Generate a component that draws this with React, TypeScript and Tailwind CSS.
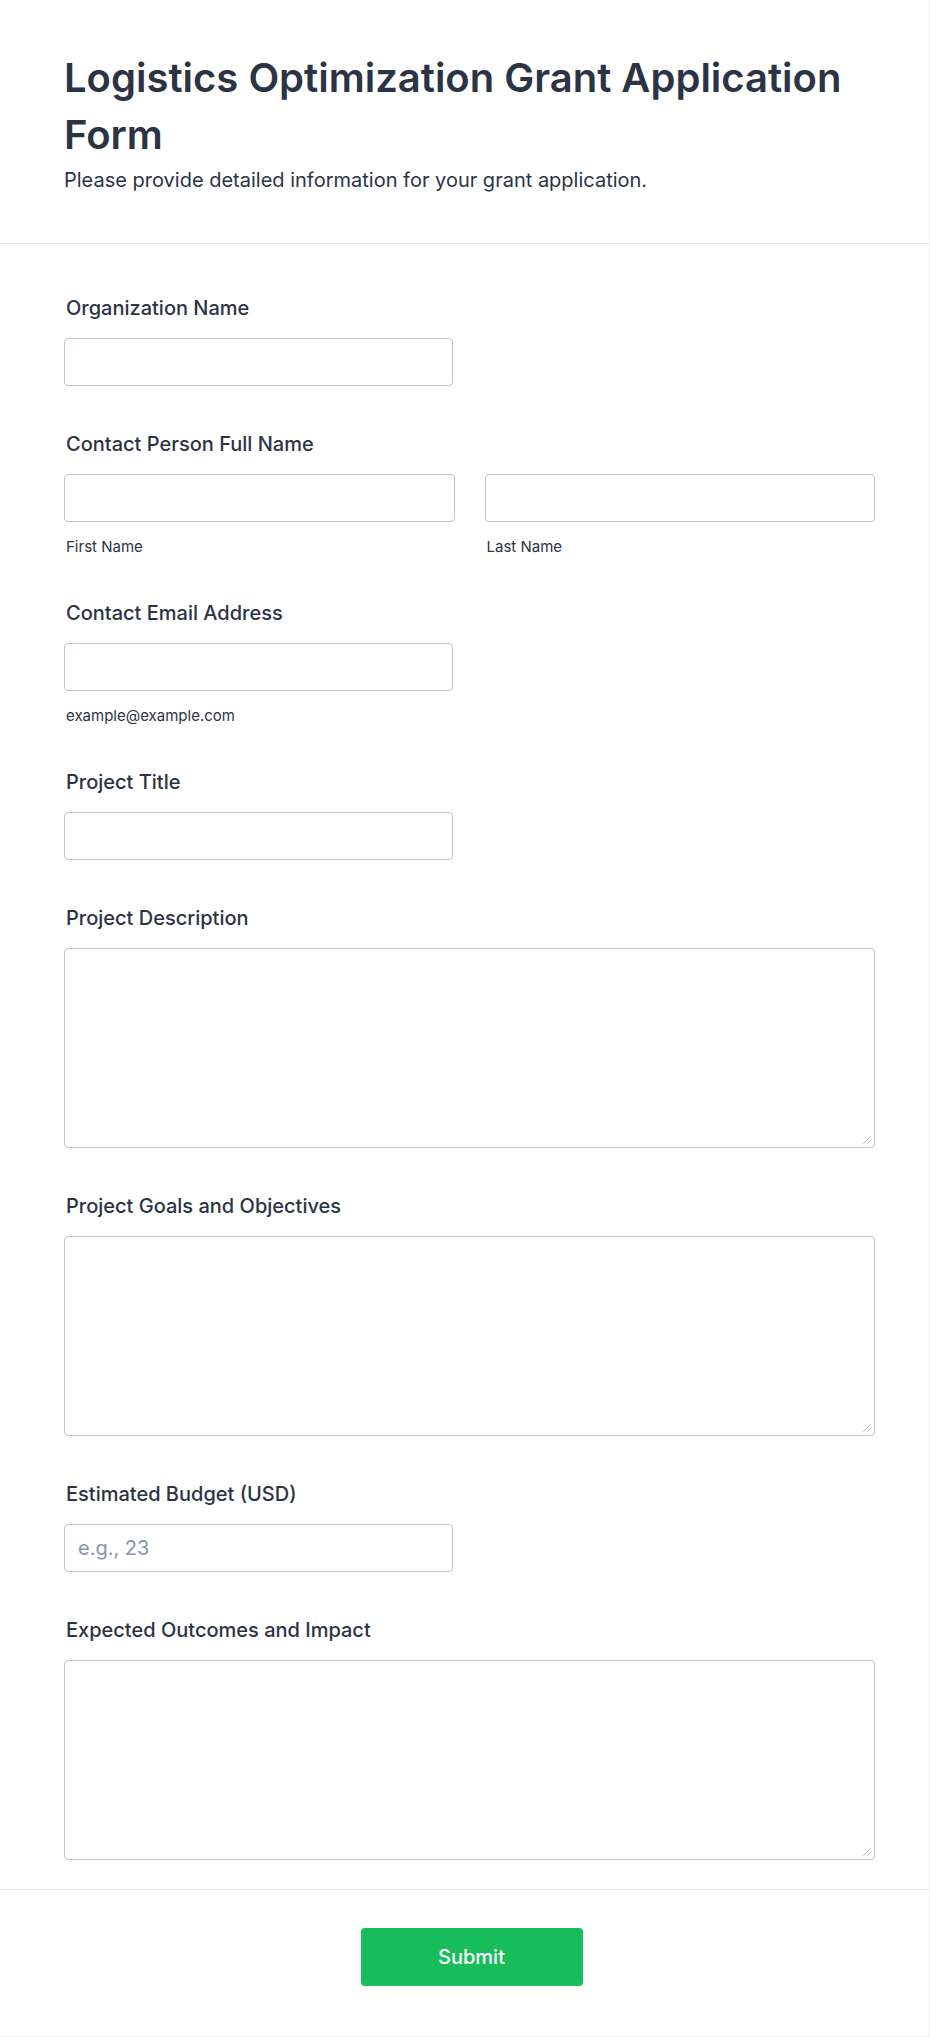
import React from "react";

const font = { fontFamily: "Inter, 'Noto Sans', sans-serif" };

function Label({ children }: { children: React.ReactNode }) {
  return (
    <label className="block pl-[2px] mb-[16px] text-[20px] leading-[28px] font-medium text-[#2c3345]">
      {children}
    </label>
  );
}

function Sub({ children }: { children: React.ReactNode }) {
  return (
    <div className="mt-[16px] pl-[2px] text-[15px] leading-[17px] text-[#2c3345]">{children}</div>
  );
}

const inputCls =
  "block h-[48px] rounded-[4px] border border-[#bcc3d2] bg-white px-[13px] text-[20px] text-[#2c3345] placeholder:text-[#8894ab] outline-none";

function Area() {
  return (
    <div className="relative">
      <textarea className="block w-full h-[200px] resize-none rounded-[4px] border border-[#bcc3d2] bg-white px-[13px] py-[10px] text-[20px] text-[#2c3345] outline-none" />
      <svg
        className="absolute right-[3px] bottom-[3px] pointer-events-none"
        width="10"
        height="10"
        viewBox="0 0 10 10"
      >
        <line x1="9" y1="1" x2="1" y2="9" stroke="#b9bfcc" strokeWidth="1" />
        <line x1="9" y1="5" x2="5" y2="9" stroke="#b9bfcc" strokeWidth="1" />
      </svg>
    </div>
  );
}

export default function App() {
  return (
    <div style={font} className="w-[930px] bg-white border-r border-b border-[#eef0f6]">
      <header className="pl-[64px] pr-[54px] pt-[49px] pb-[49px] border-b border-[#e3e5ee]">
        <h1 className="text-[40px] leading-[57px] font-semibold text-[#2c3345]">
          Logistics Optimization Grant Application Form
        </h1>
        <p className="mt-[3px] text-[20px] leading-[28px] text-[#2c3345]">
          Please provide detailed information for your grant application.
        </p>
      </header>

      <form className="pl-[64px] pr-[54px] pt-[50px] pb-[29px] flex flex-col gap-[44px]">
        <div>
          <Label>Organization Name</Label>
          <input type="text" className={inputCls + " w-[389px]"} />
        </div>

        <div>
          <Label>Contact Person Full Name</Label>
          <div className="grid grid-cols-2 gap-x-[30px]">
            <div>
              <input type="text" className={inputCls + " w-full"} />
              <Sub>First Name</Sub>
            </div>
            <div>
              <input type="text" className={inputCls + " w-full"} />
              <Sub>Last Name</Sub>
            </div>
          </div>
        </div>

        <div>
          <Label>Contact Email Address</Label>
          <input type="email" className={inputCls + " w-[389px]"} />
          <Sub>example@example.com</Sub>
        </div>

        <div>
          <Label>Project Title</Label>
          <input type="text" className={inputCls + " w-[389px]"} />
        </div>

        <div>
          <Label>Project Description</Label>
          <Area />
        </div>

        <div>
          <Label>Project Goals and Objectives</Label>
          <Area />
        </div>

        <div>
          <Label>Estimated Budget (USD)</Label>
          <input type="text" placeholder="e.g., 23" className={inputCls + " w-[389px]"} />
        </div>

        <div>
          <Label>Expected Outcomes and Impact</Label>
          <Area />
        </div>
      </form>

      <div className="border-t border-[#e3e5ee] pl-[68px] pr-[54px] pt-[38px] pb-[50px] flex justify-center">
        <button
          type="button"
          className="w-[222px] h-[58px] rounded-[4px] bg-[#18bd5b] text-white text-[20px] font-medium"
        >
          Submit
        </button>
      </div>
    </div>
  );
}
